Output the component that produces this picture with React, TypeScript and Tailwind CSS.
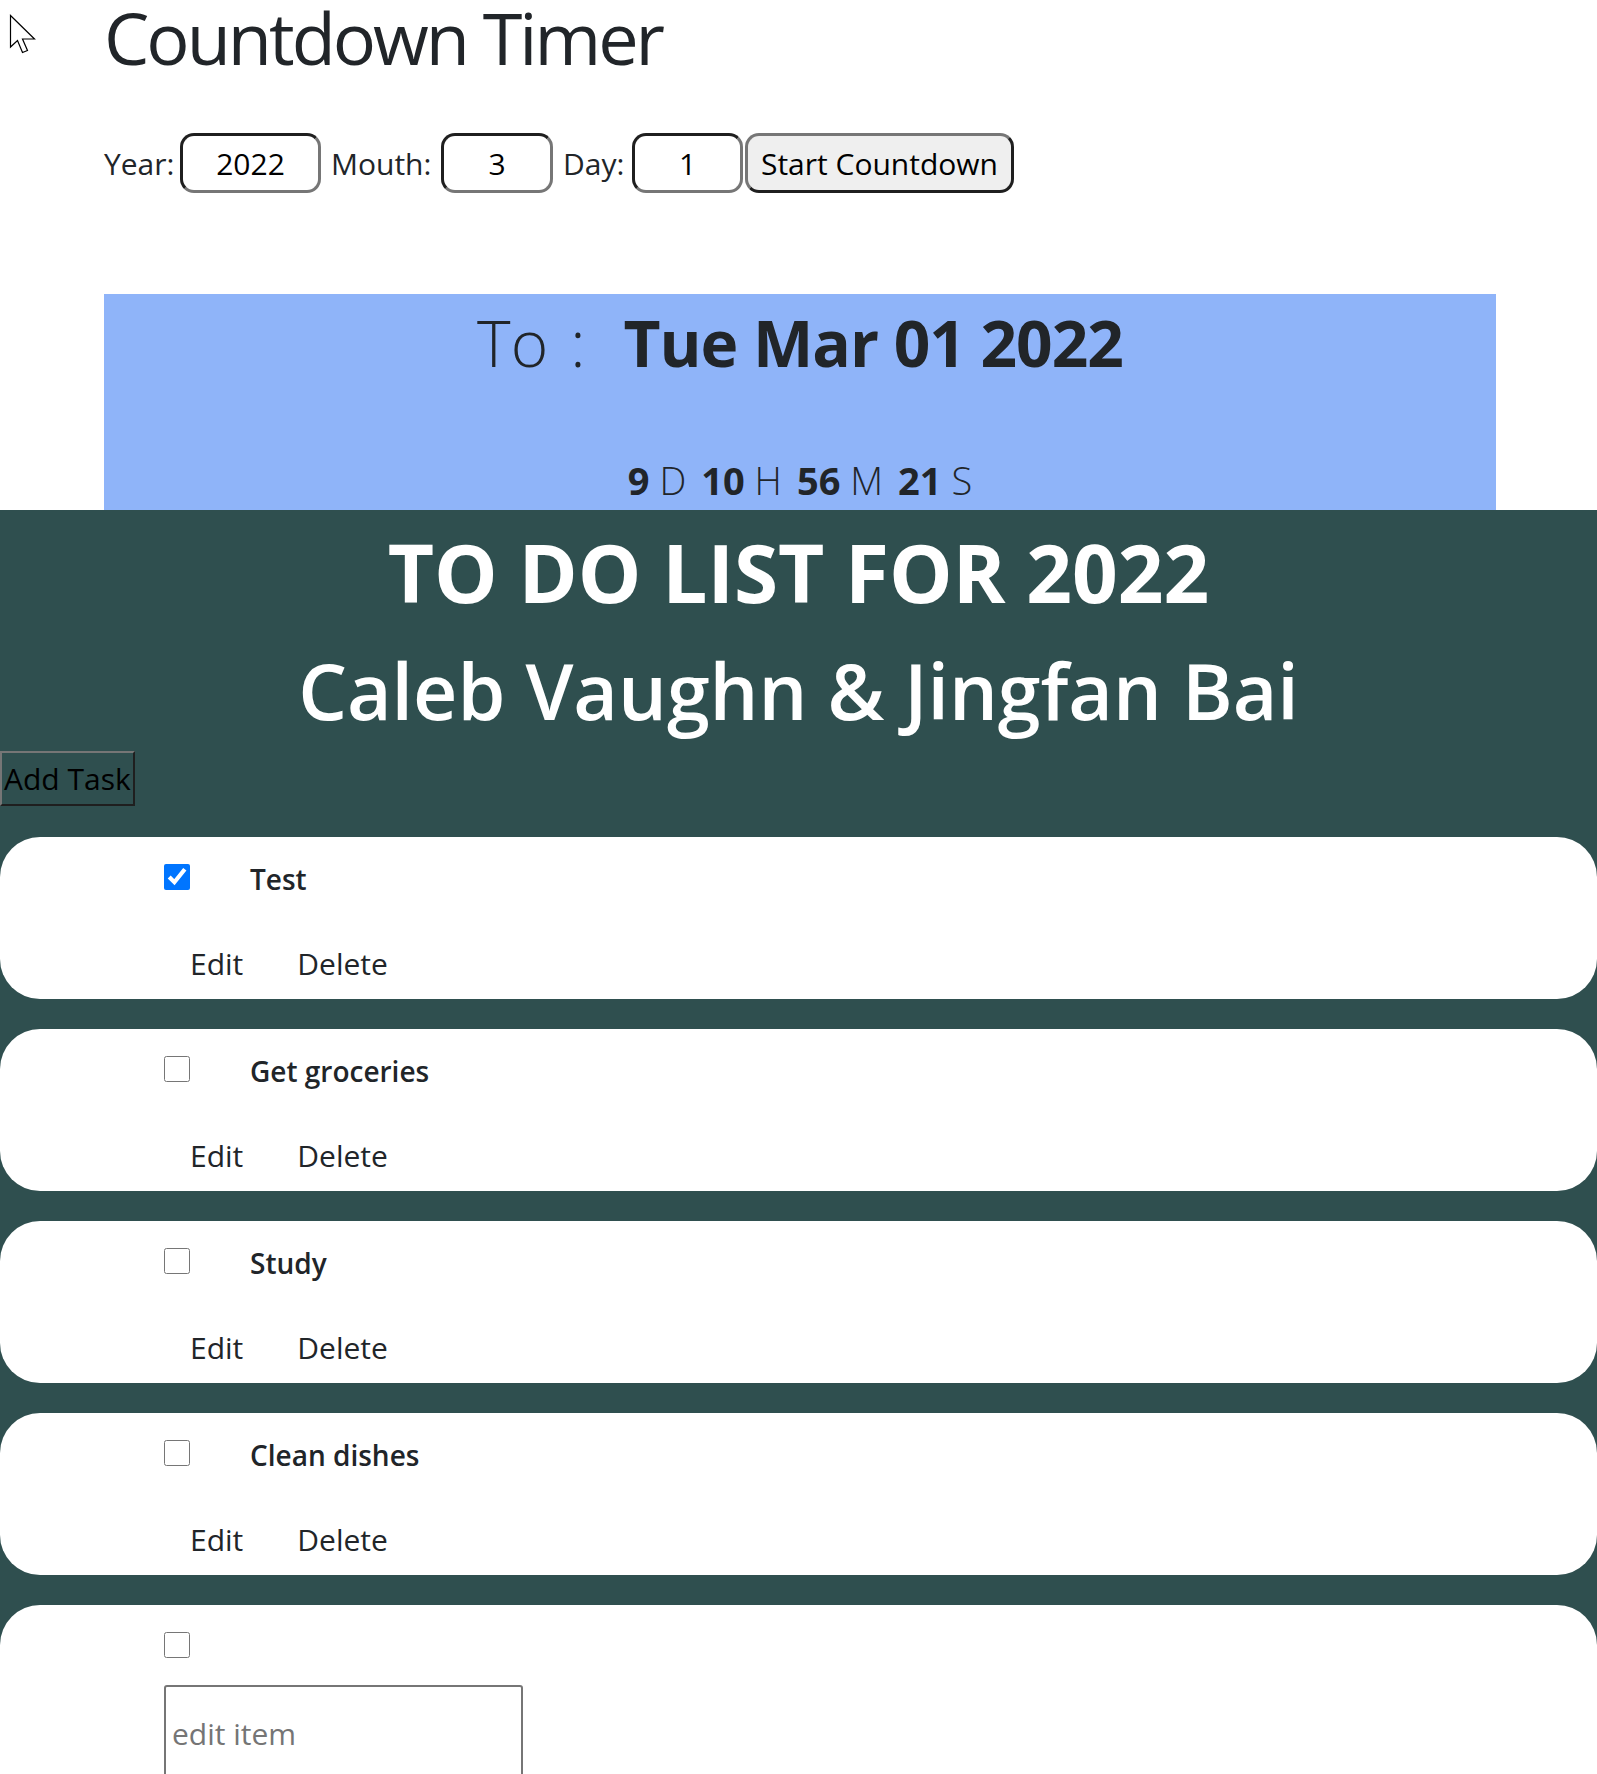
import { useState } from 'react'

const font = "font-['Open_Sans','Noto_Sans',sans-serif]"

interface Task {
  id: number
  title: string
  done: boolean
  editing?: boolean
}

const initialTasks: Task[] = [
  { id: 1, title: 'Test', done: true },
  { id: 2, title: 'Get groceries', done: false },
  { id: 3, title: 'Study', done: false },
  { id: 4, title: 'Clean dishes', done: false },
  { id: 5, title: '', done: false, editing: true },
]

function Cursor() {
  return (
    <svg
      className="absolute left-[9px] top-[14px]"
      width="28"
      height="42"
      viewBox="0 0 28 42"
    >
      <path
        d="M1.5 1.5 L1.5 33 L8.5 26.5 L13.5 38.5 L18.5 36.5 L13.5 25 L25.5 25 Z"
        fill="#fff"
        stroke="#000"
        strokeWidth="1.2"
        strokeLinejoin="miter"
      />
    </svg>
  )
}

function NumberInput({ value, width }: { value: string; width: string }) {
  return (
    <input
      defaultValue={value}
      className={`${width} h-[60px] rounded-[14px] border-[3px] border-t-[#1f1f1f] border-l-[#1f1f1f] border-r-[#767676] border-b-[#767676] bg-white text-center text-[30px] text-black outline-none`}
    />
  )
}

function CountdownForm() {
  return (
    <div className="mt-[58px] flex h-[60px] items-center text-[30px] text-[#212529]">
      <span className="w-[76px]">Year:</span>
      <NumberInput value="2022" width="w-[141px]" />
      <span className="ml-[10px] w-[110px]">Mouth:</span>
      <NumberInput value="3" width="w-[112px]" />
      <span className="ml-[10px] w-[69px]">Day:</span>
      <NumberInput value="1" width="w-[111px]" />
      <button className="ml-[2px] h-[60px] w-[269px] rounded-[14px] border-[3px] border-t-[#767676] border-l-[#767676] border-r-[#1f1f1f] border-b-[#1f1f1f] bg-[#efefef] text-[30px] text-black">
        Start Countdown
      </button>
    </div>
  )
}

function CountdownBox() {
  return (
    <div className="mt-[101px] h-[216px] w-[1392px] bg-[#8fb4f9] pt-[10px] text-[#212529]">
      <div className="flex h-[77px] items-center justify-center text-[64px] leading-[77px]">
        <span className="font-light">To</span>
        <span className="ml-[22px] font-light">:</span>
        <span className="ml-[38px] font-bold tracking-[-1px]">Tue Mar 01 2022</span>
      </div>
      <div className="mt-[71px] flex justify-center gap-[15px] text-[38px] leading-[57px]">
        <span>
          <b>9</b> <span className="font-light">D</span>
        </span>
        <span>
          <b>10</b> <span className="font-light">H</span>
        </span>
        <span>
          <b>56</b> <span className="font-light">M</span>
        </span>
        <span>
          <b>21</b> <span className="font-light">S</span>
        </span>
      </div>
    </div>
  )
}

function TaskCard({ task }: { task: Task }) {
  const [done, setDone] = useState(task.done)

  return (
    <div
      className={`mt-[30px] rounded-[40px] bg-white pl-[164px] first:mt-0 ${
        task.editing ? 'h-[280px]' : 'h-[162px]'
      }`}
    >
      <div className="flex h-[80px] items-start pt-[27px]">
        <input
          type="checkbox"
          checked={done}
          onChange={() => setDone(!done)}
          className="h-[26px] w-[26px] accent-[#0075ff]"
        />
        {task.title && (
          <span className="ml-[60px] -mt-[5px] text-[28px] font-semibold leading-[40px] text-[#212529]">
            {task.title}
          </span>
        )}
      </div>
      {task.editing ? (
        <input
          placeholder="edit item"
          className="h-[110px] w-[359px] rounded-[3px] border-2 border-[#767676] px-[6px] pb-[14px] text-[30px] text-black outline-none placeholder:text-[#757575]"
        />
      ) : (
        <div className="mt-[25px] flex text-[30px] leading-[44px] text-[#212529]">
          <button className="ml-[26px]">Edit</button>
          <button className="ml-[54px]">Delete</button>
        </div>
      )}
    </div>
  )
}

export default function App() {
  return (
    <div className={`relative h-[1774px] overflow-hidden bg-white ${font}`}>
      <Cursor />
      <div className="px-[104px]">
        <h1 className="text-[72px] font-medium leading-[75px] tracking-[-3px] text-[#212529]">
          Countdown Timer
        </h1>
        <CountdownForm />
        <CountdownBox />
      </div>

      <div className="min-h-[1264px] bg-[#2f4f4f]">
        <h1 className="pt-[14px] text-center text-[80px] font-bold leading-[96px] text-white">
          TO DO LIST FOR 2022
        </h1>
        <h1 className="mt-[23px] text-center text-[77px] font-semibold leading-[96px] text-white">
          Caleb Vaughn &amp; Jingfan Bai
        </h1>
        <button className="mt-[12px] h-[55px] border-2 border-t-[#767676] border-l-[#767676] border-r-[#1f1f1f] border-b-[#1f1f1f] px-[2px] text-[30px] leading-[50px] text-black">
          Add Task
        </button>
        <div className="mt-[31px]">
          {initialTasks.map((task) => (
            <TaskCard key={task.id} task={task} />
          ))}
        </div>
      </div>
    </div>
  )
}
